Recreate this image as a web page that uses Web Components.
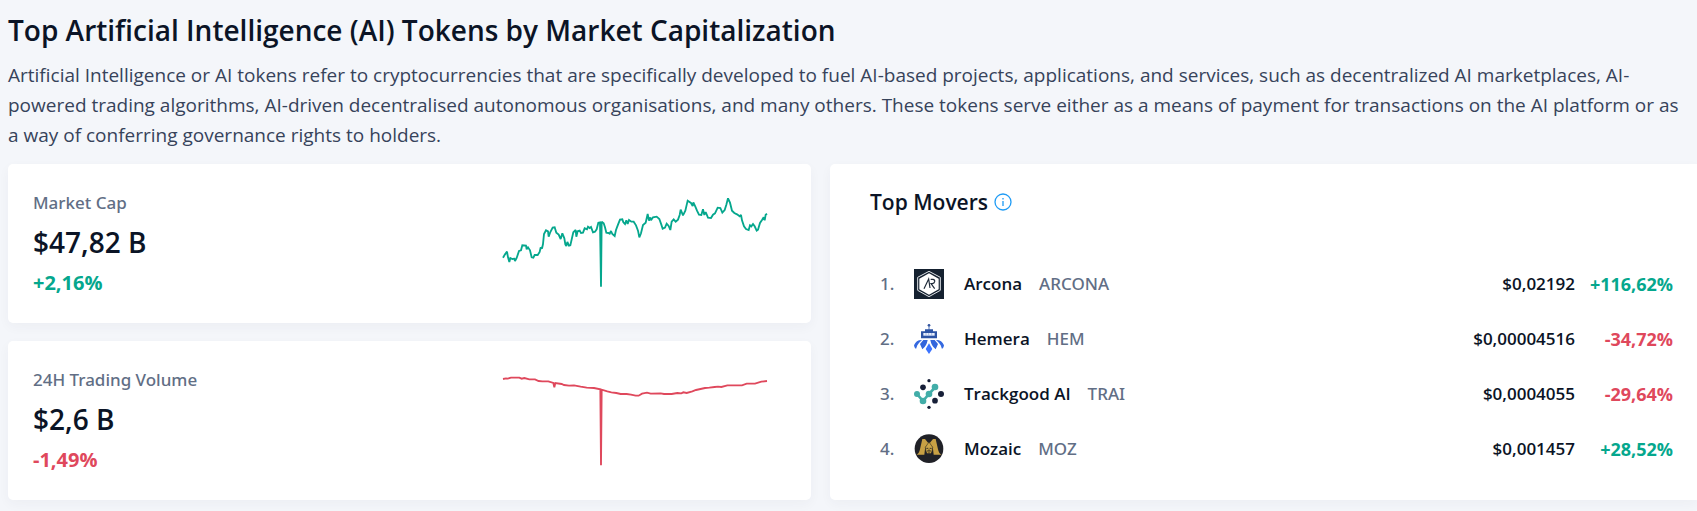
<!DOCTYPE html>
<html lang="en">
<head>
<meta charset="utf-8">
<title>Top AI Tokens by Market Capitalization</title>
<style>
  html { background: #f4f6fa; }
  body {
    margin: 0;
    font-family: "Open Sans", "Noto Sans", sans-serif;
    color: #0b1426;
    --muted: #616e85;
    --body: #37435a;
    --up: #05a78d;
    --down: #df485c;
    --info: #1e9bf5;
  }
</style>
</head>
<body>
<token-overview>
  <page-intro slot="intro">
    <span slot="heading">Top Artificial Intelligence (AI) Tokens by Market Capitalization</span>
    Artificial Intelligence or AI tokens refer to cryptocurrencies that are specifically developed to fuel AI-based projects, applications, and services, such as decentralized AI marketplaces, AI-powered trading algorithms, AI-driven decentralised autonomous organisations, and many others. These tokens serve either as a means of payment for transactions on the AI platform or as a way of conferring governance rights to holders.
  </page-intro>
  <stat-card slot="stats" trend="up">
    <span slot="label">Market Cap</span>
    <span slot="value">$47,82 B</span>
    <span slot="change">+2,16%</span>
    <spark-line trend="up" box="39 33 792 318" points="39,233 45,223 51,215 54,232 58,246 61,234 67,237 73,236 75,243 80,234 87,213 93,211 97,196 108,197 110,208 114,202 120,211 125,232 130,233 134,225 143,225 149,216 152,202 156,206 159,192 162,162 168,151 174,154 176,170 181,156 188,143 194,142 199,158 206,164 212,177 217,160 223,175 226,193 229,198 232,186 237,197 241,196 246,174 250,157 257,150 259,170 263,154 269,152 273,159 279,158 284,145 291,148 294,140 299,144 303,141 309,157 315,155 320,148 325,128 330,127 333,320 335,125 341,130 345,142 349,158 355,159 359,161 363,153 367,162 374,168 378,150 384,134 390,119 397,118 400,127 405,132 409,121 413,132 417,120 424,125 431,125 438,136 444,152 448,172 453,160 459,135 467,128 473,102 477,122 481,112 483,121 489,112 500,110 508,117 514,134 518,146 525,143 530,131 536,138 541,150 545,125 551,118 557,125 564,119 569,105 572,89 579,106 586,92 593,62 603,69 608,78 610,67 616,80 621,92 627,104 634,105 639,88 643,105 647,96 654,113 663,114 669,104 675,100 683,83 691,84 697,98 704,90 709,74 714,55 720,68 726,92 733,99 741,103 749,109 753,105 756,121 762,139 768,147 776,150 780,136 784,139 789,132 794,139 800,152 804,149 810,129 816,120 821,112 824,121 827,104 831,101"></spark-line>
  </stat-card>
  <stat-card slot="stats" trend="down">
    <span slot="label">24H Trading Volume</span>
    <span slot="value">$2,6 B</span>
    <span slot="change">-1,49%</span>
    <spark-line trend="down" box="39 21 792 318" points="39,54 48,52 53,53 63,50 88,50 95,53 103,51 118,55 135,55 146,60 157,61 175,61 190,66 193,79 196,66 215,69 222,72 237,74 252,73 272,77 290,80 312,81 331,85 333,313 335,86 352,91 364,94 379,96 392,99 410,99 423,101 437,104 446,104 456,98 471,95 482,98 512,97 522,99 545,99 562,96 574,97 580,94 590,96 607,91 618,87 645,81 658,80 674,78 684,77 694,78 712,73 756,73 770,68 795,68 814,62 831,60"></spark-line>
  </stat-card>
  <top-movers slot="movers">Top Movers</top-movers>
</token-overview>

<script>
const define = (name, html, setup) => {
  const template = document.createElement('template');
  template.innerHTML = html;
  customElements.define(name, class extends HTMLElement {
    connectedCallback() {
      if (this.shadowRoot) return;
      const root = this.attachShadow({ mode: 'open' });
      root.append(template.content.cloneNode(true));
      if (setup) setup(this, root);
    }
  });
};

define('token-overview', `
  <style>
    :host { display: block; padding: 10px 0 0 8px; }
    .grid { display: grid; grid-template-columns: minmax(0, 803fr) minmax(0, 867fr); gap: 19px; margin-top: 14px; padding-bottom: 11px; }
    .stats { display: grid; grid-auto-rows: 1fr; gap: 18px; }
  </style>
  <main>
    <slot name="intro"></slot>
    <div class="grid">
      <div class="stats"><slot name="stats"></slot></div>
      <slot name="movers"></slot>
    </div>
  </main>`);

define('page-intro', `
  <style>
    :host { display: block; padding-right: 12px; }
    h1 { margin: 0 0 10px; font-size: 28px; line-height: 40px; font-weight: 600; }
    p { margin: 0; font-size: 19px; line-height: 30px; color: var(--body); }
  </style>
  <h1><slot name="heading"></slot></h1>
  <p><slot></slot></p>`);

define('stat-card', `
  <style>
    :host { display: flex; align-items: center; justify-content: space-between; box-sizing: border-box;
      padding: 27px 44px 26px 25px; background: #fff; border-radius: 5px; box-shadow: 0 4px 12px rgba(40, 50, 80, .04); }
    :host([trend=up]) .change { color: var(--up); }
    :host([trend=down]) .change { color: var(--down); }
    .label { font-family: "Noto Sans", sans-serif; font-size: 17px; line-height: 24px; font-weight: 500; color: var(--muted); }
    .value { margin: 7px 0; font-size: 28px; line-height: 40px; font-weight: 600; }
    .change { font-size: 20px; line-height: 28px; font-weight: 700; }
  </style>
  <div>
    <div class="label"><slot name="label"></slot></div>
    <div class="value"><slot name="value"></slot></div>
    <div class="change"><slot name="change"></slot></div>
  </div>
  <slot></slot>`);

define('spark-line', `
  <style>
    :host { display: block; color: var(--up); }
    :host([trend=down]) { color: var(--down); }
    svg { display: block; width: 264px; height: 106px; overflow: visible; }
    polyline { fill: none; stroke: currentColor; stroke-width: 5.500; stroke-linejoin: miter; stroke-miterlimit: 2; }
  </style>
  <svg aria-hidden="true"><polyline/></svg>`, (host, root) => {
  root.querySelector('svg').setAttribute('viewBox', host.getAttribute('box'));
  root.querySelector('polyline').setAttribute('points', host.getAttribute('points'));
});

const coinArt = {
  ARCONA: `
    <rect width="90" height="90" fill="#152130"/>
    <path d="M45 7 79 25V64L45 83 11 64V25Z" fill="none" stroke="#dfe3e7" stroke-width="3"/>
    <path d="M45 13 74 29V61L45 77 16 61V29Z" fill="#fff"/>
    <path d="M30 59 44 30 48 57M50 31H57Q63 32 62 38 61 43 55 44H51L62 59" fill="none" stroke="#1f2b3a" stroke-width="3.5"/>`,
  HEM: `
    <circle cx="45" cy="4" r="4" fill="#30529d"/>
    <path d="M45 5V20" stroke="#5576ba" stroke-width="3"/>
    <path d="M33 16H57V22H69V43H21V22H33Z" fill="#2d54a5"/>
    <rect x="28" y="27" width="34" height="8" fill="#e9effb"/>
    <path d="M36 27V35M44 27V35M53 27V35" stroke="#8ba5dc" stroke-width="2"/>
    <path d="M24 48Q7 47 0 64Q0 70 6 75L10 64Q14 57 24 48ZM66 48Q83 47 90 64Q90 70 84 75L80 64Q76 57 66 48Z" fill="#3569e0"/>
    <path d="M41 48H28L18 60 25 76Q38 66 41 48ZM49 48H62L72 60 65 76Q52 66 49 48Z" fill="#3265dc"/>
    <path d="M45 58 55 75 45 90 35 75Z" fill="#3b73ff"/>`,
  TRAI: `
    <path d="M9 45 27 66 45 45 63 25" fill="none" stroke="#42ada8" stroke-width="8"/>
    <g fill="#42ada8"><circle cx="9" cy="45" r="9"/><circle cx="27" cy="66" r="10"/><circle cx="45" cy="45" r="10"/><circle cx="63" cy="24" r="10"/></g>
    <g fill="#171f38"><circle cx="27" cy="25" r="8.500"/><circle cx="81" cy="45" r="9"/><circle cx="63" cy="65" r="8.500"/><circle cx="45" cy="5" r="5"/><circle cx="45" cy="85" r="5"/></g>`,
  MOZ: `
    <circle cx="45" cy="44" r="43" fill="#202127"/>
    <path d="M7 62Q15 60 18 46L25 15H33L45 30 57 15H65L72 46Q75 60 83 62H59L56 36 51 58H39L34 36 31 62Z" fill="#c7a044"/>
    <path d="M34 40 45 24 56 40 53 57 48 48H42L37 57Z" fill="#cba649" stroke="#3b3423" stroke-width="2"/>
    <path d="M37 43H43M47 43H53M45 48V58" stroke="#3b3423" stroke-width="3"/>`
};

define('coin-icon', `
  <style>
    :host { display: block; }
    svg { display: block; width: 30px; height: 30px; }
  </style>
  <svg viewBox="0 0 90 90" aria-hidden="true"></svg>`, (host, root) => {
  root.querySelector('svg').innerHTML = coinArt[host.getAttribute('coin')];
});

const movers = [
  ['Arcona', 'ARCONA', '$0,02192', '+116,62%'],
  ['Hemera', 'HEM', '$0,00004516', '-34,72%'],
  ['Trackgood AI', 'TRAI', '$0,0004055', '-29,64%'],
  ['Mozaic', 'MOZ', '$0,001457', '+28,52%']
];

define('top-movers', `
  <style>
    :host { display: block; box-sizing: border-box; padding: 24px 24px 24px 40px; background: #fff;
      border-radius: 5px 0 0 5px; box-shadow: 0 4px 12px rgba(40, 50, 80, .04); }
    header { display: flex; align-items: center; gap: 6px; margin-bottom: 40px; }
    h2 { margin: 0; font-size: 21px; line-height: 28px; font-weight: 600; }
    button { display: block; padding: 0; border: 0; background: none; color: var(--info); }
    button svg { display: block; width: 18px; height: 18px; }
    table { width: 100%; border-collapse: collapse; font-size: 17px; line-height: 24px; font-weight: 600; }
    tr { height: 55px; }
    td { padding: 1px 0 0; white-space: nowrap; }
    .rank { width: 34px; padding-left: 10px; }
    .icon { width: 50px; padding: 0; }
    a { color: inherit; text-decoration: none; display: flex; gap: 17px; }
    .symbol, .rank { font-family: "Noto Sans", sans-serif; color: var(--muted); font-weight: 500; }
    .price, .change { text-align: right; }
    .change { width: 98px; font-size: 18px; font-weight: 700; }
    .up { color: var(--up); }
    .down { color: var(--down); }
  </style>
  <header>
    <h2><slot></slot></h2>
    <button type="button" aria-label="About top movers">
      <svg viewBox="0 0 18 18" fill="none" stroke="currentColor"><circle cx="9" cy="9" r="8" stroke-width="1.300"/><path d="M9 8V13M9 5V6.500" stroke-width="1.300"/></svg>
    </button>
  </header>
  <table><tbody></tbody></table>`, (host, root) => {
  root.querySelector('tbody').innerHTML = movers.map(([name, symbol, price, change], i) => `
    <tr>
      <td class="rank">${i + 1}.</td>
      <td class="icon"><coin-icon coin="${symbol}"></coin-icon></td>
      <td><a href="#${symbol}"><span>${name}</span><span class="symbol">${symbol}</span></a></td>
      <td class="price">${price}</td>
      <td class="change ${change[0] === '+' ? 'up' : 'down'}">${change}</td>
    </tr>`).join('');
});
</script>
</body>
</html>
